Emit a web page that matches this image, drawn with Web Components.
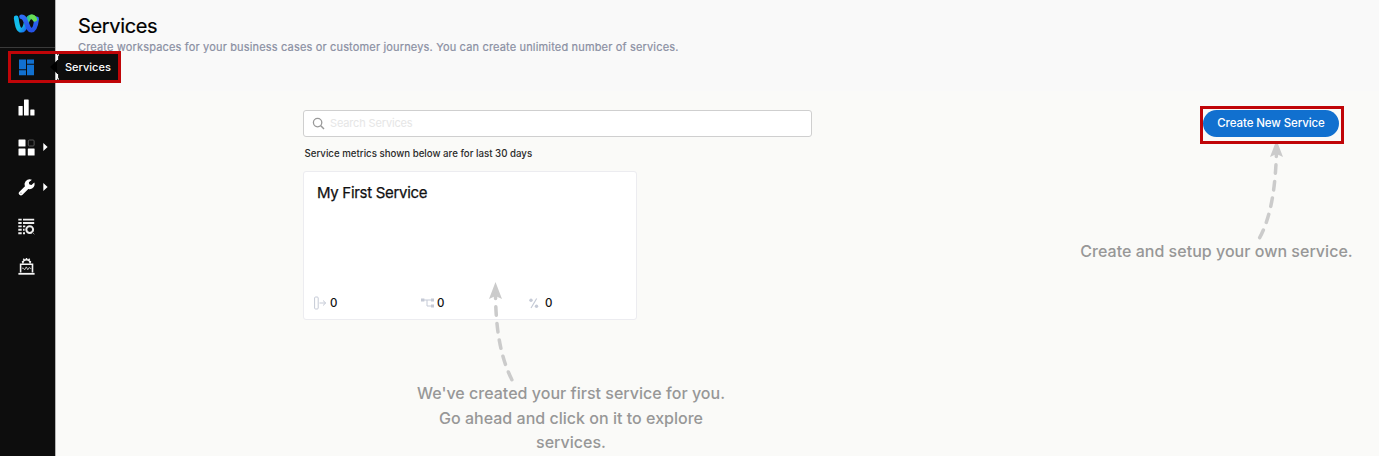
<!DOCTYPE html>
<html lang="en">
<head>
<meta charset="utf-8">
<title>Services</title>
<style>
html,body{margin:0;background:#fff}
body{font-family:Inter,"Liberation Sans",sans-serif;width:1384px;height:461px;overflow:hidden}
</style>
</head>
<body>
<services-app></services-app>
<script>
const define = (name, html) => {
  const t = document.createElement('template');
  t.innerHTML = html;
  customElements.define(name, class extends HTMLElement {
    constructor() {
      super();
      this.attachShadow({mode: 'open'}).append(t.content.cloneNode(true));
    }
  });
};

define('brand-logo', `
<style>:host{display:flex;height:47px;border-bottom:1px solid #3a3a3a;box-sizing:content-box}svg{display:block;margin:13px 0 0 13px}</style>
<svg width="28" height="22" viewBox="0 0 28 22" fill="none" stroke-linecap="round">
<defs>
<linearGradient id="a" x1="0" y1="0" x2="1" y2="1"><stop offset="0" stop-color="#12b8ee"/><stop offset=".55" stop-color="#13c3e8"/><stop offset="1" stop-color="#1769f0"/></linearGradient>
<linearGradient id="b" x1="0" y1="0" x2="0" y2="1"><stop offset="0" stop-color="#2f6df6"/><stop offset="1" stop-color="#2453e6"/></linearGradient>
<linearGradient id="c" x1="0" y1="0" x2="1" y2=".5"><stop offset="0" stop-color="#18b9a0"/><stop offset="1" stop-color="#73e34d"/></linearGradient>
</defs>
<path d="M3.2 5C4 11 5 17.2 8.5 17.2C10.7 17.2 12 14.6 13.2 10.5" stroke="url(#a)" stroke-width="4.8"/>
<path d="M13.2 10.5C14.5 6 15.8 3.8 18.4 3.8C20.2 3.8 21.2 4.8 22 6.4" stroke="url(#c)" stroke-width="4.8"/>
<path d="M23.6 6C22.9 12 21.8 17.2 18.5 17.2C13.7 17.2 13.6 3.8 8.6 3.8" stroke="url(#b)" stroke-width="4.8"/>
<path d="M18.6 3.6C20.4 3.6 21.2 4.8 22 6.4" stroke="#68de52" stroke-width="4.4"/>
</svg>`);

define('nav-item', `
<style>:host{display:grid;grid-template-columns:18px 17px 20px;height:39.8px;align-items:center;color:#fff}
.i{grid-column:2;display:flex}.m{grid-column:3;display:flex;padding-left:7.5px}
::slotted(svg){display:block;flex:none}</style>
<span class="i"><slot></slot></span><span class="m"><slot name="more"></slot></span>`);

define('side-bar', `
<style>:host{display:block;height:456px;background:#0d0d0d;border-right:1px solid #b5b5b5;box-sizing:border-box;width:56px}</style>
<brand-logo></brand-logo>
<nav>
<nav-item><svg width="17" height="17" viewBox="0 0 17 17" fill="#1170cf"><path d="M1 .5h7v9.7H1zM9 .5h7v4.2H9zM1 11.2h7v5H1zM9 5.8h7v10.4H9z"/></svg></nav-item>
<nav-item><svg width="17" height="17" viewBox="0 0 17 17" fill="#fff"><rect x=".5" y="7" width="4.2" height="9.5" rx=".6"/><rect x="6" y=".5" width="4.7" height="16" rx=".6"/><rect x="12.3" y="10.5" width="4.2" height="6" rx=".6"/></svg></nav-item>
<nav-item><svg width="17" height="17" viewBox="0 0 17 17" fill="#fff"><rect x=".5" y=".5" width="7" height="7" rx=".5"/><rect x="10.3" y="1" width="5.8" height="6" rx="1" fill="none" stroke="#555"/><rect x=".5" y="9.6" width="7" height="7" rx=".5"/><rect x="9.8" y="9.6" width="6.8" height="7" rx=".5"/></svg><svg slot="more" width="5" height="8" viewBox="0 0 5 8"><path d="M.3 0L4.6 4L.3 8z" fill="#fff"/></svg></nav-item>
<nav-item><svg width="17" height="17" viewBox="0 0 17 17"><path d="M3 14.2L10 7.3" stroke="#fff" stroke-width="4.4" stroke-linecap="round"/><path d="M13.9.8A5 5 0 1 0 16.3 3.6L13.5 6L11.2 5.4L10.9 3.3z" fill="#fff"/><circle cx="3" cy="14.2" r=".6" fill="#777"/></svg><svg slot="more" width="5" height="8" viewBox="0 0 5 8"><path d="M.3 0L4.6 4L.3 8z" fill="#fff"/></svg></nav-item>
<nav-item><svg width="17" height="17" viewBox="0 0 17 17" fill="none" stroke="#eee" style="margin-top:-1px"><path d="M.3 1.6h3.4M5 1.6h11.2M.3 5h3.4M5 5h11.2M.3 8.4h3.4M5 8.4h2.3M.3 11.8h3.4M5 11.8h1.6M.3 15.2h3.4M5 15.2h2" stroke-width="1.9"/><circle cx="11.7" cy="11.6" r="3.4" stroke-width="2"/><path d="M14.2 14.2L16.4 16.3" stroke="#888"/></svg></nav-item>
<nav-item><svg width="17" height="18" viewBox="0 0 17 18" fill="none" stroke="#f4f4f4" style="margin-top:-1px"><path d="M.4 16.8h16.2" stroke-width="1.8"/><path d="M2.6 15.5V7.3H14.5V15.5" stroke-width="1.6"/><path d="M4.8 6.5A3.7 3.7 0 0 1 12.2 6.5" stroke-width="1.6"/><path d="M4 4.3L5.2 5M8.5 1V2.4M13 4.3L11.8 5M5.3 1.8L6.4 3M11.7 1.8L10.6 3" stroke-width="1.5"/><path d="M4 11.2h1.4l1.2 1.6 1.7-2.9 1.5 2.9 1.4-2.3 1 .9h1.1" stroke-width=".9" stroke="#ccc"/></svg></nav-item>
</nav>`);

define('nav-tooltip', `
<style>:host{position:absolute;left:8px;top:51px;width:113px;height:32px;box-sizing:border-box;border:3px solid #c00508;display:flex;justify-content:flex-end}
.t{width:61px;background:#0d0d0d;color:#fff;font-size:11px;font-weight:500;line-height:27px;height:26px;padding-left:8px;box-sizing:border-box}
svg{display:block}</style>
<svg width="17" height="26" viewBox="0 1 17 26" style="margin-right:-10px;z-index:1"><path d="M0 14L7 7.5V20.5z" fill="#000"/><path d="M7.5 7V3.5Q7.5 1.8 9 1.8M7.5 21V24.5Q7.5 26.2 9 26.2" fill="none" stroke="#fff" stroke-width="1.2"/></svg><div class="t"><slot></slot></div>`);

define('page-header', `
<style>:host{display:block;height:91px;background:#f9f9f9;padding:15px 0 0 22px;box-sizing:border-box}
h1{margin:0;font-size:20px;line-height:22px;font-weight:400;color:#000;letter-spacing:-.35px;-webkit-text-stroke:.2px #000}
p{margin:3px 0 0;font-size:11px;line-height:14px;font-weight:400;-webkit-text-stroke:.2px #8b90a3;color:#8b90a3;white-space:nowrap;letter-spacing:.165px}</style>
<h1><slot name="title"></slot></h1><p><slot></slot></p>`);

define('search-box', `
<style>:host{display:flex;align-items:center;width:509px;height:27px;margin-bottom:-1px;box-sizing:border-box;border:1px solid #cfcfcf;border-radius:3px;background:#fff;padding-left:8px;gap:5px;font-size:11px;color:#e6e6e6;letter-spacing:-.15px}span{margin-top:-1px}</style>
<svg width="13" height="13" viewBox="0 0 13 13" fill="none" stroke="#999"><circle cx="5.6" cy="5.6" r="4.2" stroke-width="1.3"/><path d="M8.8 8.8L12 12" stroke-width="1.5"/></svg><span><slot></slot></span>`);

define('metric-item', `
<style>:host{display:flex;align-items:center;width:107px;font-size:11.5px;font-weight:500;color:#111}::slotted(svg){display:block;margin-right:3px;flex:none}</style><slot></slot>`);

define('service-card', `
<style>:host{display:flex;flex-direction:column;justify-content:space-between;width:334px;height:149px;box-sizing:border-box;background:#fff;border:1px solid #ececf0;border-radius:3px;padding:12px 0 9px 13px}
h2{margin:0;font-size:15px;line-height:18px;font-weight:400;color:#111;letter-spacing:-.3px;-webkit-text-stroke:.25px #111}
.m{display:flex;height:15px;margin-left:-3px}</style>
<h2><slot></slot></h2>
<div class="m">
<metric-item><svg width="13" height="14" viewBox="0 0 13 14" fill="none" stroke="#c5cad6"><rect x=".6" y="1" width="3.6" height="12" rx="1"/><path d="M5.5 7h6M9 4.5L11.7 7L9 9.5"/></svg>0</metric-item>
<metric-item><svg width="13" height="12" viewBox="0 0 13 12" stroke="#c5cad6" fill="none"><path d="M1 3h11M6 3v6h6"/><g fill="#c5cad6" stroke="none"><rect width="3.4" height="3" y="1.5"/><rect x="10" y="1.5" width="3" height="3"/><rect x="10" y="7.5" width="3" height="3"/></g></svg>0</metric-item>
<metric-item><svg width="14" height="12" viewBox="0 0 14 12" stroke="#c5cad6" fill="none"><path d="M8.7 1.5L3 11" stroke-width="1.2"/><circle cx="3" cy="3.2" r="1.7" fill="#c5cad6" stroke="none"/><circle cx="8.5" cy="9.3" r="1.7" fill="#c5cad6" stroke="none"/></svg>0</metric-item>
</div>`);

define('guide-note', `
<style>:host{position:absolute;color:#979797;font-size:16px;font-weight:500;line-height:24.5px;text-align:center;white-space:nowrap;letter-spacing:.02px}</style><slot></slot>`);

define('primary-button', `
<style>:host{display:block;box-sizing:border-box;width:144px;height:38px;border:3px solid #c00508;background:#fafaf8;padding:1px 0 0 0}
button{display:block;width:136px;height:27px;border:0;border-radius:14px;background:#1170cf;color:#fff;font:500 11.5px/27px Inter,sans-serif;letter-spacing:-.1px;padding:0;white-space:nowrap}</style>
<button><slot></slot></button>`);

define('services-app', `
<style>
:host{display:flex;position:relative;width:1379px;height:456px;background:#fafaf8;overflow:hidden}
.page{flex:1}
.body{display:flex;justify-content:space-between;padding:0 35px 0 247px}
.left{padding-top:19px}
.right{padding-top:15px}
p{margin:0;padding:10px 0;padding-left:1.5px;font-size:9.7px;font-weight:450;line-height:15px;color:#2a2a2a;white-space:nowrap}
.arrow{position:absolute}
.n1{left:411px;top:381px;width:320px}
.n2{left:1078px;top:239px;width:277px}
primary-button{position:relative;z-index:1}
</style>
<side-bar></side-bar>
<div class="page">
<page-header><span slot="title">Services</span>Create workspaces for your business cases or customer journeys. You can create unlimited number of services.</page-header>
<div class="body">
<div class="left"><search-box>Search Services</search-box><p>Service metrics shown below are for last 30 days</p><service-card>My First Service</service-card></div>
<div class="right"><primary-button>Create New Service</primary-button></div>
</div>
</div>
<svg class="arrow" style="left:480px;top:280px" width="45" height="105" viewBox="0 0 45 105"><path d="M15.5 2L22 19L15.5 16L9 19z" fill="#cbcbcb"/><path d="M15.5 14C15.8 46 19.5 75 32 100" fill="none" stroke="#cbcbcb" stroke-width="3.5" stroke-linecap="round" stroke-dasharray="8.5 8.2" stroke-dashoffset="4"/></svg>
<svg class="arrow" style="left:1250px;top:138px" width="45" height="105" viewBox="0 0 45 105"><path d="M26.5 2L33 19L26.5 16L20 19z" fill="#cbcbcb"/><path d="M26.5 14C25.5 46 22 77 9.5 100" fill="none" stroke="#cbcbcb" stroke-width="3.5" stroke-linecap="round" stroke-dasharray="8.5 8.2" stroke-dashoffset="4"/></svg>
<guide-note class="n1">We've created your first service for you.<br>Go ahead and click on it to explore<br>services.</guide-note>
<guide-note class="n2">Create and setup your own service.</guide-note>
<nav-tooltip>Services</nav-tooltip>`);
</script>
</body>
</html>
